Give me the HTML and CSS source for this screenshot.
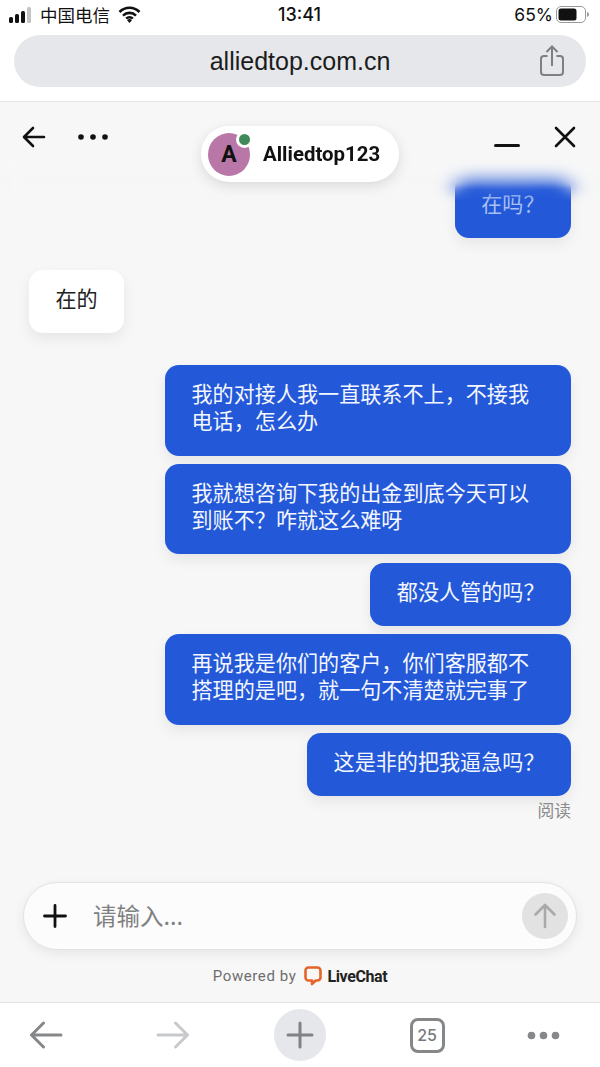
FILE: index.html
```html
<!DOCTYPE html>
<html lang="zh-CN">

<head>
    <meta charset="UTF-8">
    <meta name="viewport" content="width=device-width, initial-scale=1.0">
    <title>Allied Top Chat</title>
    <link rel="stylesheet" href="styles.css">
</head>

<body>
    <div class="statusBar">
        <div class="statusLeft">
            <svg class="signal" width="22" height="16" viewBox="0 0 22 16">
                <rect x="0" y="10" width="4" height="6" rx="1.5" fill="#111" />
                <rect x="6" y="7" width="4" height="9" rx="1.5" fill="#111" />
                <rect x="12" y="4" width="4" height="12" rx="1.5" fill="#111" />
                <rect x="18" y="0" width="4" height="16" rx="1.5" fill="#c4c4c4" />
            </svg>
            <span class="carrier">中国电信</span>
            <svg class="wifi" width="23" height="17" viewBox="0 0 23 17">
                <path d="M1.5 6a14 14 0 0 1 20 0M5 9.6a9.2 9.2 0 0 1 13 0M8.2 12.6a4.6 4.6 0 0 1 6.6 0" fill="none" stroke="#111" stroke-width="2.6" />
                <path d="M11.5 17l-2.4-2.7a3.4 3.4 0 0 1 4.8 0z" fill="#111" />
            </svg>
        </div>
        <div class="time">13:41</div>
        <div class="statusRight">
            <span>65%</span>
            <svg width="34" height="17" viewBox="0 0 34 17">
                <rect x="0.5" y="0.5" width="29" height="16" rx="4.5" fill="none" stroke="#999" />
                <rect x="2.5" y="2.5" width="18" height="12" rx="2.5" fill="#111" />
                <path d="M31 6v5c1.300-.4 2-1.400 2-2.500s-.7-2.100-2-2.500z" fill="#999" />
            </svg>
        </div>
    </div>

    <div class="addressArea">
        <div class="addressBar">
            <span class="url">alliedtop.com.cn</span>
            <svg class="shareIcon" width="26" height="32" viewBox="0 0 26 32" fill="none" stroke="#7d7f82" stroke-width="2">
                <path d="M8.500 11H5a3 3 0 0 0-3 3v13a3 3 0 0 0 3 3h16a3 3 0 0 0 3-3V14a3 3 0 0 0-3-3h-3.500" />
                <path d="M13 21V2M7.500 7L13 1.500 18.500 7" />
            </svg>
        </div>
    </div>

    <div class="chatWindow">
        <div class="messages">
            <div class="bubble mine firstMsg">在吗？</div>
            <div class="bubble theirs">在的</div>
            <div class="bubble mine">我的对接人我一直联系不上，不接我电话，怎么办</div>
            <div class="bubble mine">我就想咨询下我的出金到底今天可以到账不？咋就这么难呀</div>
            <div class="bubble mine">都没人管的吗？</div>
            <div class="bubble mine">再说我是你们的客户，你们客服都不搭理的是吧，就一句不清楚就完事了</div>
            <div class="bubble mine">这是非的把我逼急吗？</div>
            <div class="readLabel">阅读</div>
        </div>

        <div class="chatBlur"></div>
        <div class="chatHeader">
            <div class="headerLeft">
                <svg width="24" height="22" viewBox="0 0 24 22" fill="none" stroke="#111" stroke-width="2.600" stroke-linecap="round" stroke-linejoin="round">
                    <path d="M22 11H2.500M11 2l-9 9 9 9" />
                </svg>
                <svg width="30" height="6" viewBox="0 0 30 6" fill="#111">
                    <circle cx="3" cy="3" r="2.800" />
                    <circle cx="15" cy="3" r="2.800" />
                    <circle cx="27" cy="3" r="2.800" />
                </svg>
            </div>
            <div class="agentPill">
                <div class="avatar">A<span class="onlineDot"></span></div>
                <span class="agentName">Alliedtop123</span>
            </div>
            <div class="headerRight">
                <div class="minimize"></div>
                <svg width="22" height="22" viewBox="0 0 22 22" fill="none" stroke="#111" stroke-width="2.600" stroke-linecap="round">
                    <path d="M2 2l18 18M20 2L2 20" />
                </svg>
            </div>
        </div>

        <div class="composer">
            <svg width="24" height="24" viewBox="0 0 24 24" stroke="#111" stroke-width="2.800" stroke-linecap="round">
                <path d="M12 1.500v21M1.500 12h21" />
            </svg>
            <span class="placeholder">请输入...</span>
            <div class="sendBtn">
                <svg width="24" height="26" viewBox="0 0 24 26" fill="none" stroke="#a9a9a9" stroke-width="2.600" stroke-linecap="round" stroke-linejoin="round">
                    <path d="M12 24V2M2.500 11.500L12 2l9.500 9.500" />
                </svg>
            </div>
        </div>

        <div class="poweredBy">
            <span>Powered by</span>
            <svg width="18" height="20" viewBox="0 0 18 20" fill="none">
                <path d="M4.500 1.500h9a3 3 0 0 1 3 3v7a3 3 0 0 1-3 3h-1.800L8 18v-3.500H4.500a3 3 0 0 1-3-3v-7a3 3 0 0 1 3-3z" stroke="#e4642b" stroke-width="2.600" stroke-linejoin="round" />
            </svg>
            <b class="brand">LiveChat</b>
        </div>
    </div>

    <div class="bottomNav">
        <div class="navItem">
            <svg width="34" height="28" viewBox="0 0 34 28" fill="none" stroke="#858789" stroke-width="3" stroke-linecap="round" stroke-linejoin="round">
                <path d="M32 14H2.500M14.500 2L2.500 14l12 12" />
            </svg>
        </div>
        <div class="navItem">
            <svg width="34" height="28" viewBox="0 0 34 28" fill="none" stroke="#c8c9cb" stroke-width="3" stroke-linecap="round" stroke-linejoin="round">
                <path d="M2 14h29.500M19.500 2l12 12-12 12" />
            </svg>
        </div>
        <div class="navItem newTab">
            <svg width="28" height="28" viewBox="0 0 28 28" stroke="#808285" stroke-width="3" stroke-linecap="round">
                <path d="M14 2v24M2 14h24" />
            </svg>
        </div>
        <div class="navItem">
            <div class="tabCount">25</div>
        </div>
        <div class="navItem lastItem">
            <svg width="33" height="9" viewBox="0 0 33 9" fill="#858789">
                <circle cx="4.500" cy="4.500" r="3.800" />
                <circle cx="16.500" cy="4.500" r="3.800" />
                <circle cx="28.500" cy="4.500" r="3.800" />
            </svg>
        </div>
    </div>
</body>

</html>
```

FILE: styles.css
```css
* {
    box-sizing: border-box;
}

body {
    margin: 0;
    width: 600px;
    height: 1067px;
    overflow: hidden;
    background-color: #fff;
    font-family: "Noto Sans CJK SC", "Noto Sans", sans-serif;
    color: #111;
}

.statusBar {
    display: grid;
    grid-template-columns: 1fr auto 1fr;
    align-items: center;
    height: 35px;
    padding: 0 10px 6px 9px;
}

.statusLeft {
    display: flex;
    align-items: center;
    gap: 9px;
}

.carrier {
    font-size: 17.500px;
}

.wifi {
    margin-left: -1px;
}

.time {
    font-family: "Inter", sans-serif;
    font-size: 18px;
    font-weight: 500;
}

.statusRight {
    display: flex;
    align-items: center;
    justify-content: flex-end;
    gap: 3px;
    font-family: "Inter", sans-serif;
    font-size: 17.500px;
}

.addressArea {
    height: 67px;
    padding: 0 14px;
    border-bottom: 1px solid #e4e4e4;
}

.addressBar {
    position: relative;
    display: flex;
    align-items: center;
    justify-content: center;
    height: 52px;
    border-radius: 26px;
    background-color: #e5e7ea;
}

.url {
    font-family: "Liberation Sans", sans-serif;
    font-size: 25px;
    color: #1c1c1c;
}

.shareIcon {
    position: absolute;
    right: 21px;
    top: 10px;
}

.chatWindow {
    position: relative;
    display: flex;
    flex-direction: column;
    height: 901px;
    background-color: #f7f7f7;
    border-bottom: 1px solid #e2e2e2;
}

/* header fades out over the top message */
.chatBlur {
    position: absolute;
    top: 0;
    left: 0;
    right: 0;
    height: 100px;
    backdrop-filter: blur(10px);
    background: linear-gradient(#f7f7f7 56px, rgba(247, 247, 247, 0) 88px);
    -webkit-mask-image: linear-gradient(#000 82px, transparent 100px);
    mask-image: linear-gradient(#000 82px, transparent 100px);
}

.chatHeader {
    position: absolute;
    top: 0;
    left: 0;
    right: 0;
    display: flex;
    justify-content: space-between;
    padding: 24px 24px 0 22px;
}

.headerLeft {
    display: flex;
    align-items: center;
    gap: 32px;
    height: 22px;
}

.headerRight {
    display: flex;
    align-items: center;
    gap: 34px;
    height: 22px;
}

.minimize {
    width: 26px;
    height: 3px;
    margin-top: 16px;
    border-radius: 2px;
    background-color: #111;
}

.agentPill {
    position: absolute;
    top: 24px;
    left: 201px;
    display: flex;
    align-items: center;
    gap: 13px;
    width: 198px;
    height: 56px;
    padding-left: 7px;
    border-radius: 28px;
    background-color: #fff;
    box-shadow: 0 4px 14px rgba(0, 0, 0, 0.12);
}

.avatar {
    position: relative;
    display: flex;
    align-items: center;
    justify-content: center;
    width: 42px;
    height: 43px;
    border-radius: 50%;
    background-color: #b977a8;
    font-family: "Roboto", sans-serif;
    font-size: 23px;
    font-weight: 700;
}

.onlineDot {
    position: absolute;
    top: -2px;
    right: -3px;
    width: 17px;
    height: 17px;
    border: 3px solid #fff;
    border-radius: 50%;
    background-color: #3f8a58;
}

.agentName {
    font-family: "Roboto", sans-serif;
    font-size: 20.400px;
    font-weight: 700;
}

.messages {
    flex: 1;
    display: flex;
    flex-direction: column;
    align-items: flex-end;
    gap: 8.250px;
    padding: 72.500px 29px 0;
}

.bubble {
    max-width: 406px;
    padding: 15px 26.500px 21px;
    border-radius: 14px;
    font-size: 21.100px;
    line-height: 27.250px;
    box-shadow: 0 6px 14px rgba(0, 0, 0, 0.07);
}

.mine {
    background-color: #2358d8;
    color: #f4f7ff;
}

.firstMsg {
    color: #a9c0f4;
}

.theirs {
    align-self: flex-start;
    margin: 23.750px 0;
    background-color: #fff;
    color: #222;
}

.readLabel {
    margin-top: -6px;
    font-size: 16.800px;
    line-height: 24px;
    color: #8a8a8a;
}

.composer {
    display: flex;
    align-items: center;
    height: 68px;
    margin: 0 23px;
    padding: 0 8px 0 19px;
    border: 1px solid #e3e3e3;
    border-radius: 34px;
    background-color: #fcfcfc;
    box-shadow: 0 4px 12px rgba(0, 0, 0, 0.07);
}

.placeholder {
    flex: 1;
    margin-left: 26px;
    margin-top: -2px;
    font-size: 23.500px;
    color: #808080;
}

.sendBtn {
    display: flex;
    align-items: center;
    justify-content: center;
    width: 46px;
    height: 46px;
    border-radius: 50%;
    background-color: #e2e2e2;
}

.poweredBy {
    display: flex;
    align-items: center;
    justify-content: center;
    gap: 8px;
    height: 52px;
    font-family: "Roboto", sans-serif;
    font-size: 15px;
    letter-spacing: 0.6px;
    color: #6e6e6e;
}

.brand {
    margin-left: -3px;
    font-size: 16px;
    letter-spacing: -0.4px;
    color: #222;
}

.bottomNav {
    display: flex;
    align-items: center;
    gap: 75px;
    height: 64px;
    padding-left: 20px;
    background-color: #fff;
}

.navItem {
    display: flex;
    align-items: center;
    justify-content: center;
    flex: none;
    width: 52px;
    height: 52px;
}

.newTab {
    border-radius: 50%;
    background-color: #e5e7ea;
}

.lastItem {
    margin-left: -11px;
}

.tabCount {
    display: flex;
    align-items: center;
    justify-content: center;
    width: 35px;
    height: 35px;
    border: 3px solid #858789;
    border-radius: 8px;
    font-family: "Inter", sans-serif;
    font-size: 16px;
    font-weight: 500;
    color: #77797b;
}
```
